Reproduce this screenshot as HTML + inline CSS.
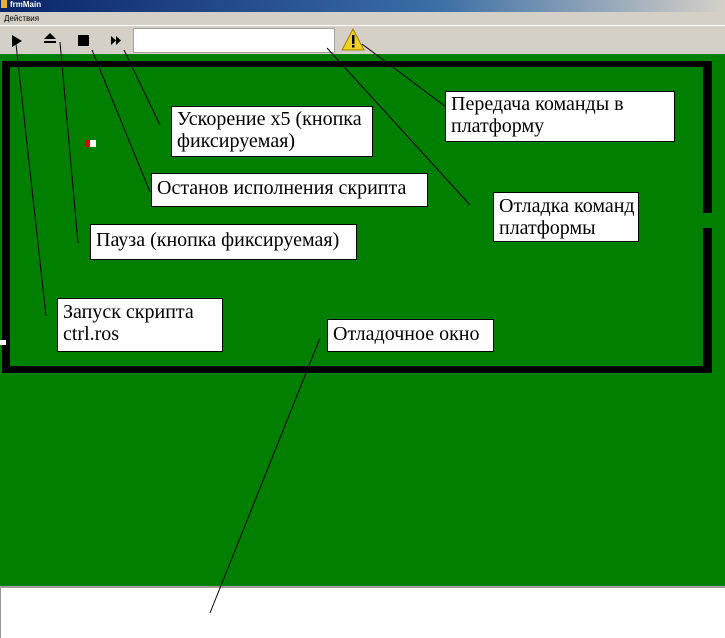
<!DOCTYPE html>
<html><head><meta charset="utf-8"><style>
body{margin:0;width:725px;height:638px;overflow:hidden;position:relative;background:#d4d0c8;font-family:"Liberation Serif",serif}
.a{position:absolute}
.box{position:absolute;background:#fff;border:1px solid #000;font-size:20px;line-height:22px;padding:1px 4px 0 5px;box-sizing:border-box;color:#000;white-space:nowrap}
</style></head><body>
<div class="a" style="left:0;top:0;width:725px;height:12px;background:linear-gradient(90deg,#0a246a,#3a6ea5 60%,#d4d0c8);"></div>
<div class="a" style="left:1px;top:0;width:6px;height:8px;background:#e8b030"></div>
<div class="a" style="left:10px;top:0;font:bold 8px 'Liberation Sans',sans-serif;color:#fff;line-height:10px">frmMain</div>
<div class="a" style="left:4px;top:14px;font:8px 'Liberation Sans',sans-serif;color:#000">Действия</div>
<div class="a" style="left:0;top:25px;width:725px;height:1px;background:#fff"></div>
<svg class="a" style="left:0;top:26px" width="380" height="28">
<polygon points="12,9 22,15 12,21" fill="#000"/>
<polygon points="44,13 50,7 56,13" fill="#000"/><rect x="44" y="15" width="12" height="2" fill="#000"/>
<rect x="78" y="9" width="11" height="11" fill="#000"/>
<polygon points="111,10 116,14.5 111,19" fill="#000"/><polygon points="116,10 121,14.5 116,19" fill="#000"/>
<rect x="133.5" y="2.5" width="201" height="24" fill="#fff" stroke="#a0a0a0"/>
<polygon points="353,3 342,24 364,24" fill="#f0d020" stroke="#a08000"/>
<rect x="352" y="9" width="2.5" height="9" fill="#000"/><rect x="352" y="19" width="2.5" height="2.5" fill="#000"/>
</svg>
<div class="a" style="left:0;top:54px;width:725px;height:532px;background:#007f00"></div>
<div class="a" style="left:0;top:586px;width:725px;height:2px;background:#a09c98"></div>
<div class="a" style="left:0;top:588px;width:725px;height:50px;background:#fff;border-left:1px solid #999;box-sizing:border-box"></div>
<div class="a" style="left:2px;top:61px;width:710px;height:6px;background:#000"></div>
<div class="a" style="left:2px;top:61px;width:8px;height:312px;background:#000"></div>
<div class="a" style="left:2px;top:366px;width:710px;height:7px;background:#000"></div>
<div class="a" style="left:703px;top:61px;width:9px;height:152px;background:#000"></div>
<div class="a" style="left:703px;top:228px;width:9px;height:145px;background:#000"></div>
<div class="a" style="left:0;top:340px;width:6px;height:5px;background:#fff"></div>
<div class="a" style="left:86px;top:140px;width:4px;height:7px;background:#e00000"></div>
<div class="a" style="left:90px;top:140px;width:6px;height:7px;background:#fff"></div>
<svg class="a" style="left:0;top:0" width="725" height="638">
<g stroke="#000" stroke-width="1" fill="none">
<line x1="16" y1="44" x2="46" y2="316"/>
<line x1="60" y1="42" x2="78" y2="243"/>
<line x1="92" y1="50" x2="150" y2="192"/>
<line x1="124" y1="50" x2="160" y2="125"/>
<line x1="327" y1="48" x2="470" y2="205"/>
<line x1="362" y1="44" x2="450" y2="110"/>
<line x1="320" y1="338" x2="210" y2="613"/>
</g></svg>
<div class="box" style="left:171px;top:106px;width:202px;height:51px">Ускорение x5 (кнопка<br>фиксируемая)</div>
<div class="box" style="left:445px;top:91px;width:230px;height:51px">Передача команды в<br>платформу</div>
<div class="box" style="left:151px;top:173px;width:277px;height:34px;padding-top:3px">Останов исполнения скрипта</div>
<div class="box" style="left:493px;top:192px;width:146px;height:50px;padding-top:2px">Отладка команд<br>платформы</div>
<div class="box" style="left:90px;top:224px;width:267px;height:36px;padding-top:4px">Пауза (кнопка фиксируемая)</div>
<div class="box" style="left:57px;top:298px;width:166px;height:54px;padding-top:2px">Запуск скрипта<br>ctrl.ros</div>
<div class="box" style="left:327px;top:319px;width:167px;height:33px;padding-top:3px">Отладочное окно</div>
</body></html>
